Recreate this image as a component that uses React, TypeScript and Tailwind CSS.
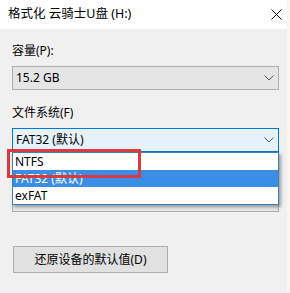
import React from 'react';

const font = { fontFamily: '"Noto Sans", "Noto Sans CJK SC", sans-serif' };

const Chevron: React.FC = () => (
  <svg width="10" height="6" viewBox="0 0 10 6" className="shrink-0">
    <polyline points="0.5,0.5 5,5 9.5,0.5" fill="none" stroke="#555" strokeWidth="1" />
  </svg>
);

const Combo: React.FC<{ value?: string; active?: boolean }> = ({ value, active }) => (
  <div
    className={
      active
        ? 'h-[24px] flex items-center justify-between pl-[3px] pr-[4px] border border-[#0078d7] bg-[#e5f1fb] text-[12px] text-black'
        : 'h-[24px] flex items-center justify-between pl-[3px] pr-[4px] border border-[#adadad] bg-[#e5e5e5] text-[12px] text-black'
    }
  >
    <span>{value}</span>
    <Chevron />
  </div>
);

export default function App() {
  const items = ['NTFS', 'FAT32 (默认)', 'exFAT'];

  return (
    <div className="relative w-[290px] h-[293px] flex overflow-hidden" style={font}>
      <div className="w-[287px] flex flex-col bg-[#f0f0f0]">
        {/* title bar */}
        <div className="h-[29px] bg-white flex items-center justify-between pl-2 pr-[5px]">
          <span className="text-[12.5px] text-black">格式化 云骑士U盘 (H:)</span>
          <svg width="11" height="11" viewBox="0 0 11 11">
            <path d="M0.5 0.5 L10.5 10.5 M10.5 0.5 L0.5 10.5" stroke="#111" strokeWidth="1" />
          </svg>
        </div>

        {/* body */}
        <div className="flex flex-col pl-3 pr-[8px] pt-[13px]">
          <div className="h-[17px] leading-[17px] text-[12px] text-black">容量(P):</div>
          <div className="mt-[7px]">
            <Combo value="15.2 GB" />
          </div>

          <div className="mt-[14px] h-[17px] leading-[17px] text-[12px] text-black">文件系统(F)</div>
          <div className="relative mt-[7px] z-10">
            <Combo value="FAT32 (默认)" active />
            <div className="absolute left-0 right-0 top-full bg-white border border-[#3d7fb8] shadow-[2px_2px_3px_rgba(0,0,0,0.35)] text-[12px]">
              {items.map((item, i) => (
                <div
                  key={item}
                  className={
                    i === 1
                      ? 'h-[17px] leading-[17px] pl-[2px] bg-[#3a8ee6] text-white'
                      : 'h-[17px] leading-[17px] pl-[2px] text-black'
                  }
                >
                  {item}
                </div>
              ))}
            </div>
          </div>

          {/* allocation unit row, covered by the open list */}
          <div className="mt-[36px]">
            <Combo />
          </div>

          <button className="mt-[34px] ml-px w-[155px] h-[27px] bg-[#e1e1e1] border border-[#adadad] text-[12px] text-black">
            还原设备的默认值(D)
          </button>
        </div>
      </div>
      <div className="w-[3px] bg-[#f8f6f1]" />

      {/* red highlight */}
      <div className="absolute left-[7px] top-[149px] w-[134px] h-[29px] border-[3px] border-[#dd3a40] z-20" />
    </div>
  );
}
